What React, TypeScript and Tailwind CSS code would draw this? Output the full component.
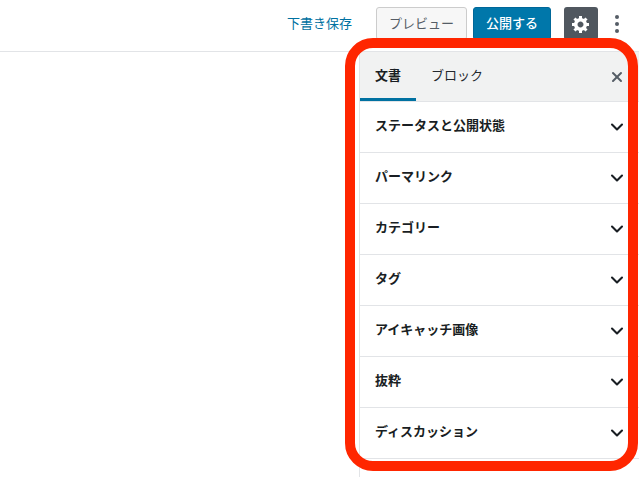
import { ChevronDown, X } from "lucide-react";

const sections = [
  "ステータスと公開状態",
  "パーマリンク",
  "カテゴリー",
  "タグ",
  "アイキャッチ画像",
  "抜粋",
  "ディスカッション",
];

const Gear = () => (
  <svg width="20" height="20" viewBox="0 0 20 20" fill="currentColor">
    <path d="M18 12h-2.18c-.17.7-.44 1.35-.81 1.93l1.54 1.54-2.1 2.1-1.54-1.54c-.58.36-1.23.63-1.91.79V19H8v-2.18c-.68-.16-1.33-.43-1.91-.79l-1.54 1.54-2.12-2.12 1.54-1.54c-.36-.58-.63-1.23-.79-1.91H1V9.03h2.17c.16-.7.44-1.35.8-1.94L2.43 5.55l2.1-2.1 1.54 1.54c.58-.37 1.24-.64 1.93-.81V2h3v2.18c.68.16 1.33.43 1.91.79l1.54-1.54 2.12 2.12-1.54 1.54c.36.59.64 1.24.8 1.94H18V12zm-8.5 1.5c1.66 0 3-1.34 3-3s-1.34-3-3-3-3 1.34-3 3 1.34 3 3 3z" />
  </svg>
);

export default function App() {
  return (
    <div
      className="relative w-[639px] h-[477px] overflow-hidden bg-white text-[#191e23]"
      style={{ fontFamily: '"Noto Sans CJK JP", "Noto Sans", sans-serif' }}
    >
      <header className="h-[52px] border-b border-[#e2e4e7] flex items-start justify-end pt-[7px] text-[13px]">
        <span className="text-[#0071a1] mr-[24px] mt-[6px] leading-[20px]">下書き保存</span>
        <button className="w-[91px] h-[33px] mr-[6px] pb-[1px] rounded-[3px] border border-[#cccccc] bg-[#f7f7f7] text-[#555d66]">
          プレビュー
        </button>
        <button className="w-[78px] h-[33px] mr-[13px] pb-[1px] rounded-[3px] border border-[#006799] bg-[#0077aa] text-white font-medium">
          公開する
        </button>
        <button className="w-[34px] h-[33px] mr-[12px] rounded-[3px] bg-[#50575f] text-white flex items-center justify-center">
          <Gear />
        </button>
        <div className="w-[14px] mr-[15px] h-[33px] flex flex-col items-center justify-center gap-[3px]">
          <span className="w-[4px] h-[4px] rounded-full bg-[#555d66]" />
          <span className="w-[4px] h-[4px] rounded-full bg-[#555d66]" />
          <span className="w-[4px] h-[4px] rounded-full bg-[#555d66]" />
        </div>
      </header>

      <aside className="ml-[359px] w-[280px] h-[425px] border-l border-[#e2e4e7]">
        <div className="h-[50px] bg-[#f1f2f2] border-b border-[#e2e4e7] flex items-stretch text-[13px]">
          <div className="w-[56px] flex items-center justify-center font-bold border-b-[3px] border-[#0071a1] h-[49px]">
            文書
          </div>
          <div className="ml-[15px] flex items-center pb-[4px] text-[#23282d]">ブロック</div>
          <X size={16} strokeWidth={3} className="ml-auto mr-[14px] self-center text-[#555d66]" />
        </div>
        {sections.map((title) => (
          <div
            key={title}
            className="h-[51px] border-b border-[#e2e4e7] pl-[15px] pr-[12px] flex items-center justify-between text-[13px] font-bold"
          >
            <span className="pb-[4px]">{title}</span>
            <ChevronDown size={20} strokeWidth={2.5} />
          </div>
        ))}
      </aside>

      <div className="absolute left-[345px] top-[38px] w-[293px] h-[433px] rounded-[28px] border-[10px] border-[#ff2600]" />
    </div>
  );
}
